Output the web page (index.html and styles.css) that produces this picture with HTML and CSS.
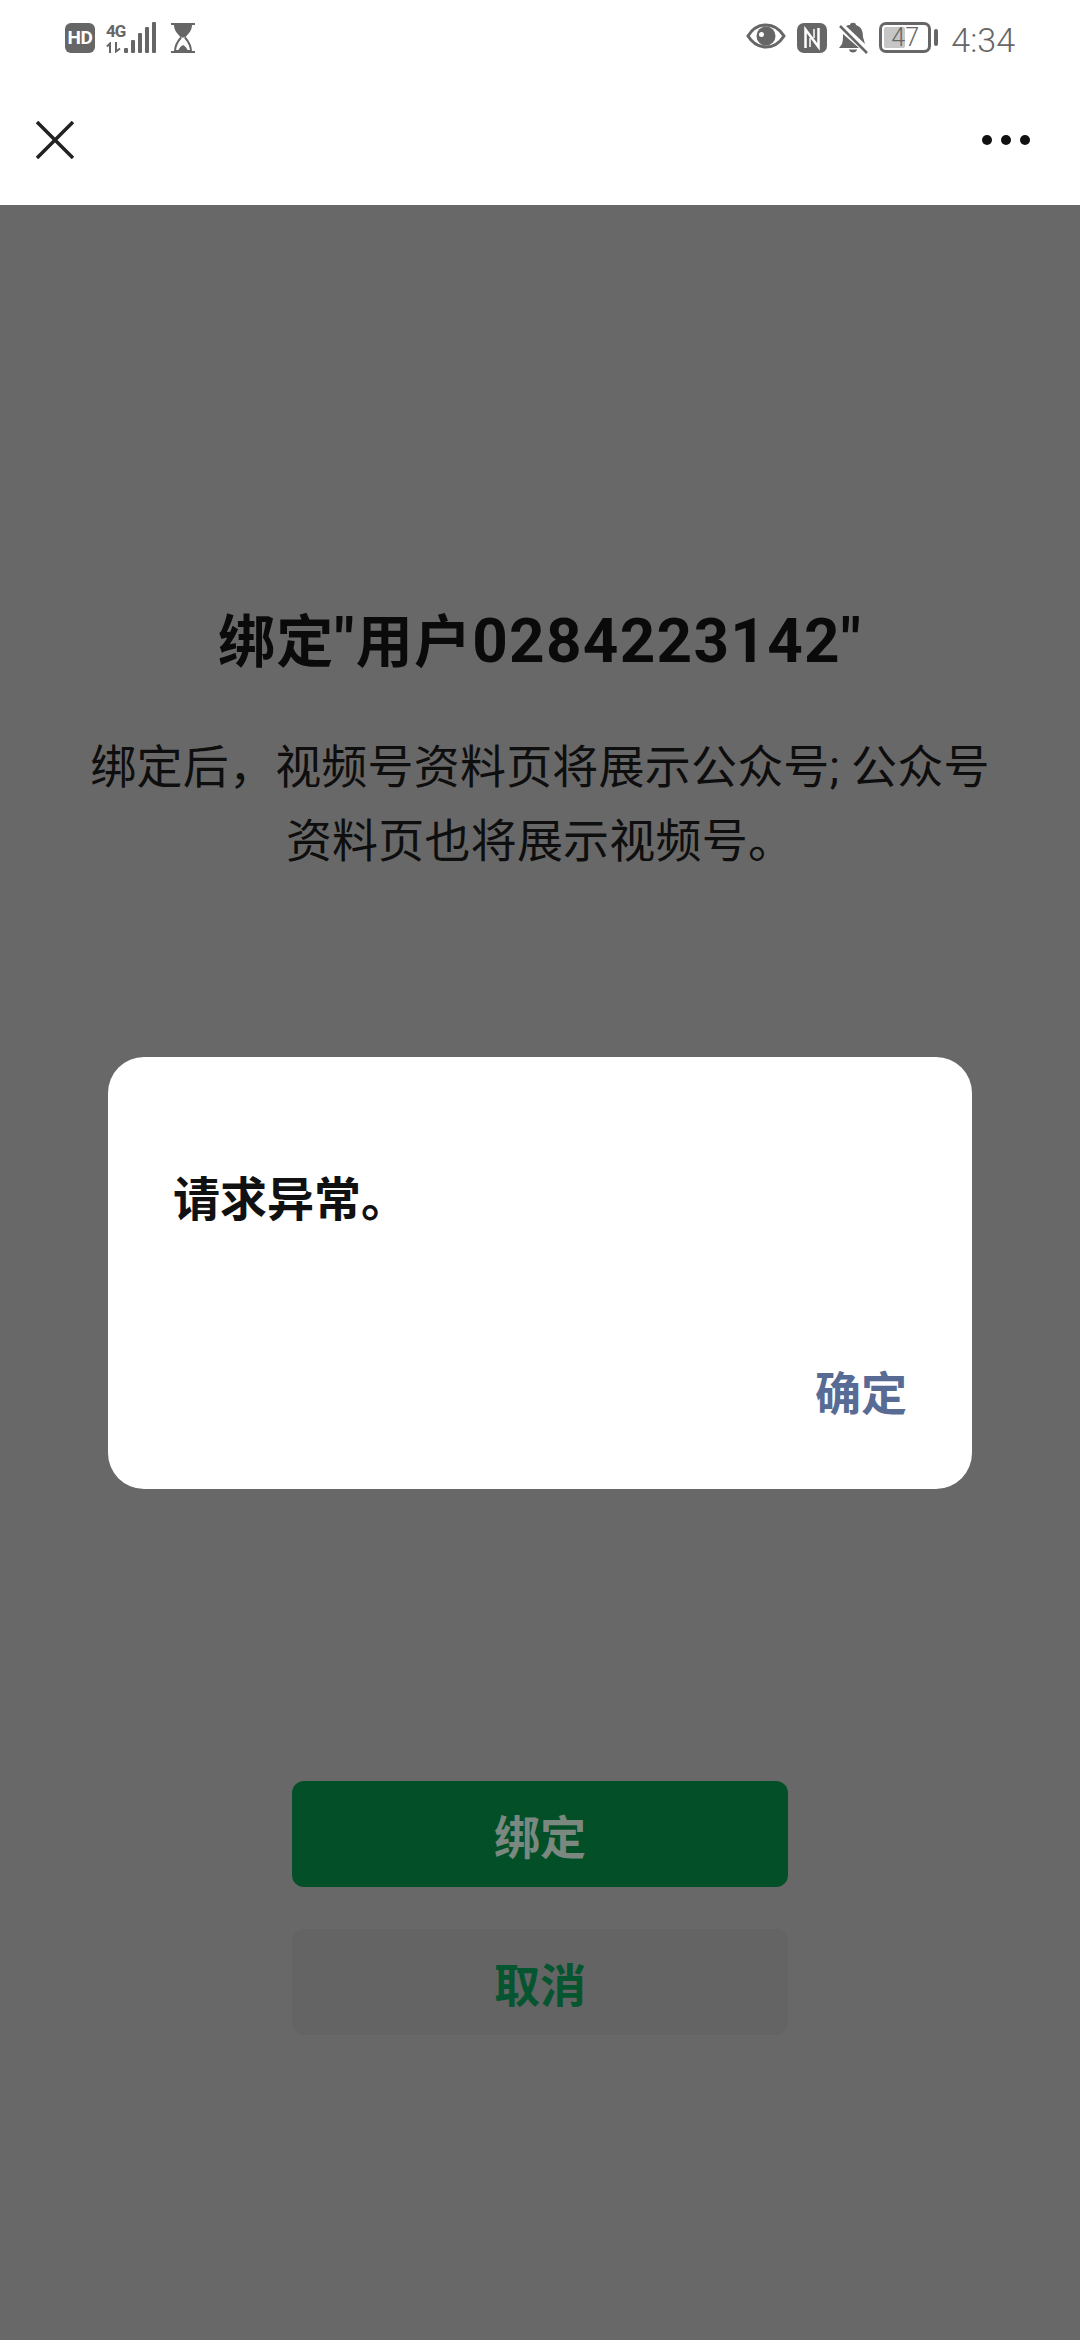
FILE: index.html
```html
<!DOCTYPE html>
<html lang="zh-CN">
<head>
  <meta charset="UTF-8" />
  <title>绑定</title>
  <meta name="viewport" content="width=device-width, initial-scale=1" />
  <link rel="stylesheet" href="styles.css">
</head>
<body>
  <header class="top">
    <div class="status-bar">
      <div class="status-left">
        <span class="hd-badge">HD</span>
        <div class="network">
          <span class="network-type">4G</span>
          <svg class="network-arrows" width="15" height="11" viewBox="0 0 15 11">
            <path d="M4 11V1.500L1 4.500" fill="none" stroke="#666" stroke-width="2"/>
            <path d="M10 0v9.500L14 6.500" fill="none" stroke="#666" stroke-width="2"/>
          </svg>
        </div>
        <svg class="signal" width="33" height="31" viewBox="0 0 33 31">
          <rect x="1" y="26" width="4" height="5" rx="1"/>
          <rect x="8" y="18" width="4" height="13" rx="1"/>
          <rect x="15" y="11" width="4" height="20" rx="1"/>
          <rect x="22" y="5" width="4" height="26" rx="1"/>
          <rect x="29" y="0" width="4" height="31" rx="1"/>
        </svg>
        <svg class="hourglass" width="24" height="30" viewBox="0 0 24 30">
          <path d="M0 0h24v2H0zM0 28h24v2H0z" fill="#666"/>
          <path d="M3 2h18c0 6-4 9-7 12.500h-4C7 11 3 8 3 2z" fill="#666"/>
          <path d="M10 14.500C7 18 4 22 4 28h16c0-6-3-10-6-13.500" fill="none" stroke="#666" stroke-width="2"/>
          <path d="M7 28c1-3 3-5 5-6 2 1 4 3 5 6z" fill="#666"/>
        </svg>
      </div>
      <div class="status-right">
        <svg class="eye" width="40" height="26" viewBox="0 0 40 26">
          <path d="M2 13C7 5 13 2 20 2s13 3 18 11c-5 8-11 11-18 11S7 21 2 13z" fill="none" stroke="#666" stroke-width="3"/>
          <circle cx="20" cy="13" r="9.500" fill="#666"/>
          <circle cx="15.500" cy="11.500" r="2.500" fill="#fff"/>
        </svg>
        <svg class="nfc" width="30" height="30" viewBox="0 0 30 30">
          <rect width="30" height="30" rx="7" fill="#666"/>
          <path d="M8.500 25V6.500L21.500 24V5" fill="none" stroke="#fff" stroke-width="2.500"/>
          <path d="M13 24V15M17 6v9" fill="none" stroke="#fff" stroke-width="1.500"/>
        </svg>
        <svg class="bell" width="30" height="32" viewBox="0 0 30 32">
          <path d="M12 3c0-3 6-3 6 0 6 2 7 7 7 12l2 7L8 4c1-.500 2-1 4-1zM5 12 21 26H1l3-4c1-3 1-7 1-10z" fill="#666"/>
          <path d="M11 27.500h8c-.500 4-7.500 4-8 0z" fill="#666"/>
          <path d="M2 4l27 27" stroke="#666" stroke-width="2.500"/>
        </svg>
        <div class="battery">
          <div class="battery-box">
            <span class="battery-fill"></span>
            <span class="battery-level">47</span>
          </div>
          <span class="battery-nub"></span>
        </div>
        <span class="clock">4:34</span>
      </div>
    </div>
    <nav class="nav-bar">
      <svg class="close-icon" width="38" height="38" viewBox="0 0 38 38">
        <path d="M1 1l36 36M37 1 1 37" stroke="#222" stroke-width="3.500" fill="none"/>
      </svg>
      <div class="more-icon"><i></i><i></i><i></i></div>
    </nav>
  </header>

  <main class="page">
    <h1 class="title">绑定<span class="title-latin">"</span>用户<span class="title-latin">0284223142"</span></h1>
    <p class="desc">绑定后，视频号资料页将展示公众号; 公众号资料页也将展示视频号。</p>
    <div class="actions">
      <button class="btn btn-primary">绑定</button>
      <button class="btn btn-default">取消</button>
    </div>

    <div class="mask">
      <div class="dialog">
        <p class="dialog-text">请求异常。</p>
        <div class="dialog-foot"><span class="dialog-ok">确定</span></div>
      </div>
    </div>
  </main>
</body>
</html>
```

FILE: styles.css
```css
* {
  box-sizing: border-box;
}

html, body {
  margin: 0;
  padding: 0;
}

body {
  width: 1080px;
  height: 2340px;
  display: flex;
  flex-direction: column;
  font-family: Roboto, "Noto Sans CJK SC", sans-serif;
  background-color: #fff;
  color: #111;
  overflow: hidden;
}

.top {
  height: 205px;
  flex: none;
  background-color: #fff;
}

.status-bar {
  height: 75px;
  padding: 22px 65px 0;
  display: flex;
  justify-content: space-between;
  align-items: flex-start;
}

.status-left, .status-right {
  display: flex;
  align-items: flex-start;
}

.hd-badge {
  width: 30px;
  height: 30px;
  margin-top: 1px;
  border-radius: 6px;
  background-color: #666;
  color: #fff;
  font-size: 19px;
  font-weight: 700;
  line-height: 30px;
  text-align: center;
  letter-spacing: -0.5px;
}

.network {
  width: 17px;
  margin-left: 11px;
  display: flex;
  flex-direction: column;
}

.network-type {
  height: 19px;
  color: #666;
  font-size: 17px;
  font-weight: 700;
  line-height: 19px;
  letter-spacing: -1px;
  white-space: nowrap;
}

.network-arrows {
  margin-top: 1px;
}

.signal {
  fill: #666;
}

.hourglass {
  margin-left: 15px;
  margin-top: 1px;
}

.eye {
  margin-top: 1px;
}

.nfc {
  margin-left: 11px;
  margin-top: 1px;
}

.bell {
  margin-left: 11px;
}

.battery {
  margin-left: 11px;
  display: flex;
  align-items: center;
}

.battery-box {
  position: relative;
  width: 52px;
  height: 31px;
  border: 3px solid #666;
  border-radius: 7px;
}

.battery-fill {
  position: absolute;
  left: 2px;
  top: 2px;
  bottom: 2px;
  width: 21px;
  border-radius: 2px;
  background-color: #c6c6c6;
}

.battery-level {
  position: absolute;
  left: 9px;
  top: 0;
  color: #666;
  font-size: 25px;
  font-weight: 300;
  line-height: 25px;
}

.battery-nub {
  width: 4px;
  height: 17px;
  margin-left: 3px;
  border-radius: 2px;
  background-color: #666;
}

.clock {
  margin-left: 13px;
  margin-top: 3px;
  color: #666;
  font-size: 34px;
  font-weight: 300;
  line-height: 30px;
}

.nav-bar {
  height: 130px;
  padding: 0 50px 0 36px;
  display: flex;
  justify-content: space-between;
  align-items: center;
}

.more-icon {
  display: flex;
  gap: 9px;
}

.more-icon i {
  width: 10px;
  height: 10px;
  border-radius: 50%;
  background-color: #111;
}

.page {
  position: relative;
  flex: 1;
  padding-top: 396px;
  background-color: #686868;
  text-align: center;
}

.title {
  height: 80px;
  margin: 0;
  color: #0a0a0a;
  font-size: 57px;
  font-weight: 700;
  line-height: 80px;
  letter-spacing: 1.3px;
}

.title-latin {
  font-size: 62px;
}

.desc {
  width: 920px;
  margin: 49px auto 0;
  color: #0e0e0e;
  font-size: 46px;
  line-height: 74px;
  letter-spacing: 0.2px;
}

.actions {
  width: 496px;
  margin: 903px auto 0;
  display: flex;
  flex-direction: column;
  gap: 42px;
}

.btn {
  height: 106px;
  border: none;
  border-radius: 12px;
  font-family: inherit;
  font-size: 46px;
  font-weight: 700;
}

.btn-primary {
  background-color: #035028;
  color: #7a8880;
}

.btn-default {
  background-color: #646464;
  color: #045530;
}

.mask {
  position: absolute;
  inset: 0;
  display: flex;
  align-items: center;
  justify-content: center;
}

.dialog {
  width: 864px;
  padding: 111px 65px 63px 65px;
  border-radius: 36px;
  background-color: #fff;
  text-align: left;
}

.dialog-text {
  margin: 0;
  color: #111;
  font-size: 47px;
  font-weight: 700;
  line-height: 64px;
}

.dialog-foot {
  margin-top: 130px;
  display: flex;
  justify-content: flex-end;
}

.dialog-ok {
  color: #576b95;
  font-size: 46px;
  font-weight: 700;
  line-height: 64px;
}
```
